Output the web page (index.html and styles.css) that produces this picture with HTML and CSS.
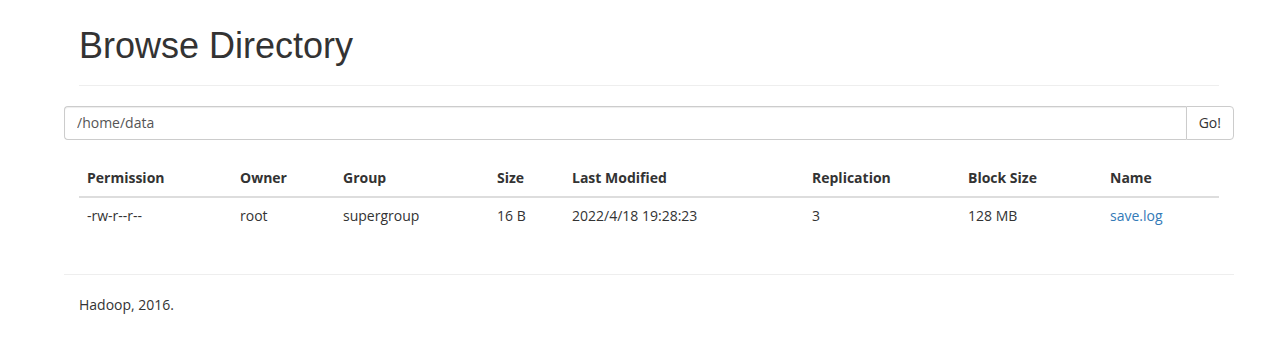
FILE: index.html
```html
<!DOCTYPE html>
<html lang="en">
<head>
    <meta charset="UTF-8">
    <meta name="viewport" content="width=device-width, initial-scale=1.0">
    <title>Browsing HDFS</title>
    <link rel="stylesheet" href="styles.css">
</head>
<body>

    <div class="container">

        <!-- 标题 -->
        <div class="page-header">
            <h1>Browse Directory</h1>
        </div>

        <!-- 路径输入 -->
        <div class="input-group">
            <input class="form-control" id="directory" type="text" value="/home/data">
            <button class="btn-go" type="button">Go!</button>
        </div>

        <!-- 文件列表 -->
        <table class="table">
            <thead>
                <tr>
                    <th class="col-perm">Permission</th>
                    <th class="col-owner">Owner</th>
                    <th class="col-group">Group</th>
                    <th class="col-size">Size</th>
                    <th class="col-date">Last Modified</th>
                    <th class="col-repl">Replication</th>
                    <th class="col-block">Block Size</th>
                    <th>Name</th>
                </tr>
            </thead>
            <tbody>
                <tr>
                    <td>-rw-r--r--</td>
                    <td>root</td>
                    <td>supergroup</td>
                    <td>16 B</td>
                    <td>2022/4/18 19:28:23</td>
                    <td>3</td>
                    <td>128 MB</td>
                    <td><a href="#">save.log</a></td>
                </tr>
            </tbody>
        </table>

        <hr>
        <div class="footer">
            <p>Hadoop, 2016.</p>
        </div>
    </div>

</body>
</html>
```

FILE: styles.css
```css
* {
    box-sizing: border-box;
}

body {
    margin: 0;
    background: white;
    color: #333;
    font-family: 'Open Sans', sans-serif;
    font-size: 14px;
    line-height: 20px;
}

/* 主容器 */
.container {
    width: 1170px;
    margin-left: 64px;
}

.page-header {
    margin: 26px 15px 20px;
    padding-bottom: 9px;
    border-bottom: 1px solid #eee;
}

.page-header h1 {
    margin: 20px 0 10px;
    font-family: 'Liberation Sans', Arial, sans-serif;
    font-size: 36px;
    font-weight: normal;
    line-height: 1.1;
    color: #333;
}

/* 输入框 */
.input-group {
    display: flex;
    height: 34px;
}

.form-control {
    flex: 1;
    height: 34px;
    padding: 6px 12px;
    border: 1px solid #ccc;
    border-right: none;
    border-radius: 4px 0 0 4px;
    box-shadow: inset 0 1px 1px rgba(0, 0, 0, 0.075);
    font-family: 'Open Sans', sans-serif;
    font-size: 14px;
    color: #555;
    outline: none;
}

.btn-go {
    height: 34px;
    padding: 6px 12px;
    border: 1px solid #ccc;
    border-radius: 0 4px 4px 0;
    background: white;
    color: #333;
    font-family: 'Open Sans', sans-serif;
    font-size: 14px;
    line-height: 20px;
}

/* 表格 */
.table {
    width: 1140px;
    margin: 20px 15px;
    border-collapse: collapse;
    border-spacing: 0;
}

.table th,
.table td {
    padding: 8px;
    text-align: left;
    vertical-align: top;
    line-height: 20px;
}

.table th {
    font-weight: bold;
    border-bottom: 2px solid #ddd;
}

.col-perm { width: 153px; }
.col-owner { width: 103px; }
.col-group { width: 154px; }
.col-size { width: 75px; }
.col-date { width: 240px; }
.col-repl { width: 156px; }
.col-block { width: 142px; }

.table a {
    color: #337ab7;
    text-decoration: none;
}

hr {
    margin: 40px 0 20px;
    border: 0;
    border-top: 1px solid #eee;
}

.footer p {
    margin: 0 15px 10px;
}
```
